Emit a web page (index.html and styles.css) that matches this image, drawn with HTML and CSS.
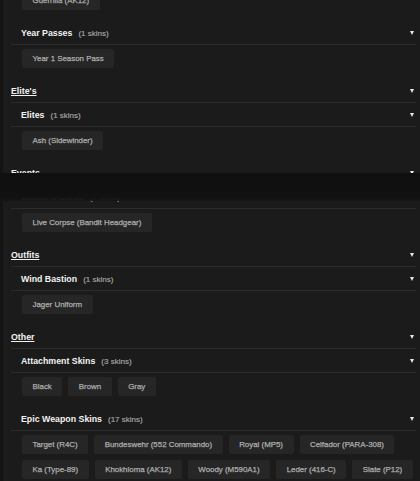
FILE: index.html
```html
<!DOCTYPE html>
<html>
<head>
<meta charset="utf-8">
<link rel="stylesheet" href="styles.css">
</head>
<body>
<div class="page">
  <div class="list">
    <div class="chips"><span class="chip">Guerrilla (AK12)</span></div>

    <div class="sub"><span class="title">Year Passes<span class="count">(1 skins)</span></span><span class="arrow"></span></div>
    <div class="chips"><span class="chip">Year 1 Season Pass</span></div>

    <div class="group"><span class="gtitle">Elite's</span><span class="arrow"></span></div>
    <div class="sub"><span class="title">Elites<span class="count">(1 skins)</span></span><span class="arrow"></span></div>
    <div class="chips"><span class="chip">Ash (Sidewinder)</span></div>

    <div class="group"><span class="gtitle">Events</span><span class="arrow"></span></div>
    <div class="sub"><span class="title">Doktor's Curse<span class="count">(1 skins)</span></span><span class="arrow"></span></div>
    <div class="chips"><span class="chip">Live Corpse (Bandit Headgear)</span></div>

    <div class="group"><span class="gtitle">Outfits</span><span class="arrow"></span></div>
    <div class="sub"><span class="title">Wind Bastion<span class="count">(1 skins)</span></span><span class="arrow"></span></div>
    <div class="chips"><span class="chip">Jager Uniform</span></div>

    <div class="group"><span class="gtitle">Other</span><span class="arrow"></span></div>
    <div class="sub"><span class="title">Attachment Skins<span class="count">(3 skins)</span></span><span class="arrow"></span></div>
    <div class="chips"><span class="chip">Black</span><span class="chip">Brown</span><span class="chip">Gray</span></div>

    <div class="sub"><span class="title">Epic Weapon Skins<span class="count">(17 skins)</span></span><span class="arrow"></span></div>
    <div class="chips">
      <span class="chip">Target (R4C)</span>
      <span class="chip">Bundeswehr (552 Commando)</span>
      <span class="chip">Royal (MP5)</span>
      <span class="chip">Celfador (PARA-308)</span>
      <span class="chip">Ka (Type-89)</span>
      <span class="chip">Khokhloma (AK12)</span>
      <span class="chip">Woody (M590A1)</span>
      <span class="chip">Leder (416-C)</span>
      <span class="chip">Slate (P12)</span>
      <span class="chip">Dust Line (M4)</span>
      <span class="chip">Bartlett (SMG-11)</span>
      <span class="chip">Dragon (T-95 LSW)</span>
    </div>
  </div>
  <div class="band"></div>
</div>
</body>
</html>
```

FILE: styles.css
```css
html, body {
  margin: 0;
  padding: 0;
}

body {
  background: #141414;
  font-family: "Liberation Sans", Arial, sans-serif;
  height: 481px;
  overflow: hidden;
}

.page {
  position: relative;
  display: flow-root;
  margin-left: 3px;
  min-height: 481px;
  background: #1b1b1b;
  padding: 0 4px 0 8px;
}

.list {
  margin-top: -13px;
}

.group,
.sub {
  display: flex;
  justify-content: space-between;
  align-items: center;
  height: 23px;
  border-bottom: 1px solid #2c2c2c;
}

.sub {
  padding-left: 10px;
}

.gtitle {
  color: #f2f2f2;
  font-weight: bold;
  font-size: 8.8px;
  text-decoration: underline;
}

.title {
  color: #f2f2f2;
  font-weight: bold;
  font-size: 8.8px;
}

.count {
  color: #a0a0a0;
  font-weight: normal;
  font-size: 8px;
  margin-left: 6px;
  -webkit-text-stroke: 0.2px #a0a0a0;
}

.arrow {
  width: 0;
  height: 0;
  border-left: 2.5px solid transparent;
  border-right: 2.5px solid transparent;
  border-top: 4px solid #e8e8e8;
  margin-right: 2px;
}

.chips {
  display: flex;
  flex-wrap: wrap;
  gap: 6px;
  padding: 4px 0 11px 11px;
}

.chip {
  height: 19px;
  line-height: 19px;
  padding: 0 10.5px;
  background: #262626;
  border-radius: 2px;
  color: #adadad;
  font-size: 7.9px;
  white-space: nowrap;
  -webkit-text-stroke: 0.25px #adadad;
}

.band {
  position: absolute;
  left: -3px;
  right: 0;
  top: 173px;
  height: 28px;
  background: linear-gradient(to bottom, #0f0f0f 0%, #111111 85%, rgba(21, 21, 21, 0.92) 100%);
}
```
